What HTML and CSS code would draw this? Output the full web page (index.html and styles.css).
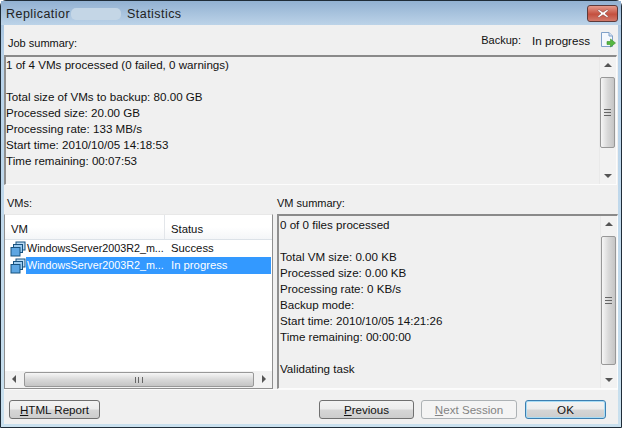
FILE: index.html
```html
<!DOCTYPE html>
<html lang="en">
<head>
<meta charset="utf-8">
<title>Replication Statistics</title>
<link rel="stylesheet" href="styles.css">
</head>
<body>
<div class="window">
  <div class="titlebar">
    <div class="title">Replicatior<span class="blur"></span>Statistics</div>
    <div class="close"><svg width="16" height="11" viewBox="0 0 16 11"><path d="M4 1.5 8 4.2 12 1.5 13.5 2.5 10 5.5 13.5 8.5 12 9.500 8 6.800 4 9.500 2.500 8.500 6 5.500 2.500 2.500Z" fill="#fff" stroke="#8a4a44" stroke-width=".6"/></svg></div>
  </div>
  <div class="content">
    <div class="summary-head">
      <span class="small job-label">Job summary:</span>
      <div class="state">
        <span class="small">Backup:</span><span>In progress</span>
        <svg class="state-icon" width="16" height="16" viewBox="0 0 16 16"><path d="M1.500.5H9L12.500 4V14.500H1.500Z" fill="#f4f8fd" stroke="#7fa0c8"/><path d="M9 .5V4H12.500" fill="#d5e3f3" stroke="#7fa0c8"/><path d="M7 9.500H10.500V7L15.500 11 10.500 15V12.500H7Z" fill="#55b840" stroke="#3d8f2e" stroke-width=".6"/></svg>
      </div>
    </div>
    <div class="textbox job">
      <div class="lines">
        <div>1 of 4 VMs processed (0 failed, 0 warnings)</div>
        <div>&nbsp;</div>
        <div>Total size of VMs to backup: 80.00 GB</div>
        <div>Processed size: 20.00 GB</div>
        <div>Processing rate: 133 MB/s</div>
        <div>Start time: 2010/10/05 14:18:53</div>
        <div>Time remaining: 00:07:53</div>
      </div>
      <div class="vscroll">
        <div class="arrow up"></div>
        <div class="track job-track"><div class="thumb job-thumb"><span class="grip"></span></div></div>
        <div class="arrow down"></div>
      </div>
    </div>
    <div class="lower">
      <div class="col">
        <div class="label small">VMs:</div>
        <div class="list">
          <div class="list-head"><div class="cell-vm head-vm">VM</div><div class="cell-status">Status</div></div>
          <div class="row">
            <svg class="vm-icon" width="16" height="16" viewBox="0 0 16 16"><rect x="6" y="1" width="9" height="8" fill="#bcdcf5" stroke="#17527f"/><rect x="3.500" y="3.500" width="9" height="8" fill="#9ccbef" stroke="#17527f"/><rect x="1" y="6.500" width="9" height="8.500" fill="#5da6e2" stroke="#17527f"/></svg>
            <div class="cell-vm">WindowsServer2003R2_m...</div><div class="cell-status">Success</div>
          </div>
          <div class="row selected">
            <svg class="vm-icon" width="16" height="16" viewBox="0 0 16 16"><rect x="6" y="1" width="9" height="8" fill="#bcdcf5" stroke="#17527f"/><rect x="3.500" y="3.500" width="9" height="8" fill="#9ccbef" stroke="#17527f"/><rect x="1" y="6.500" width="9" height="8.500" fill="#5da6e2" stroke="#17527f"/></svg>
            <div class="cell-vm hl">WindowsServer2003R2_m...</div><div class="cell-status hl">In progress</div>
          </div>
          <div class="list-space"></div>
          <div class="hscroll">
            <div class="arrow left"></div>
            <div class="hthumb"><span class="hgrip"></span></div>
            <div class="arrow right"></div>
          </div>
        </div>
      </div>
      <div class="col col-right">
        <div class="label small">VM summary:</div>
        <div class="textbox vmbox">
          <div class="lines">
            <div>0 of 0 files processed</div>
            <div>&nbsp;</div>
            <div>Total VM size: 0.00 KB</div>
            <div>Processed size: 0.00 KB</div>
            <div>Processing rate: 0 KB/s</div>
            <div>Backup mode:</div>
            <div>Start time: 2010/10/05 14:21:26</div>
            <div>Time remaining: 00:00:00</div>
            <div>&nbsp;</div>
            <div>Validating task</div>
          </div>
          <div class="vscroll">
            <div class="arrow up"></div>
            <div class="track vm-track"><div class="thumb vm-thumb"><span class="grip"></span></div></div>
            <div class="arrow down"></div>
          </div>
        </div>
      </div>
    </div>
    <div class="footer">
      <button class="btn report"><u>H</u>TML Report</button>
      <div class="footer-right">
        <button class="btn nav"><u>P</u>revious</button>
        <button class="btn next disabled"><u>N</u>ext Session</button>
        <button class="btn ok">OK</button>
      </div>
    </div>
  </div>
</div>
</body>
</html>
```
FILE: styles.css
```css
* { box-sizing: border-box; }
html, body { margin: 0; padding: 0; }
body { width: 622px; height: 428px; overflow: hidden; background: #fff; }
.window {
  width: 622px; height: 428px;
  display: flex; flex-direction: column;
  background: linear-gradient(#9fbcd9, #b9d3ea 60px, #c9e0ee);
  border: 1px solid #1f2c38; border-radius: 6px 6px 0 0;
  font-family: "Liberation Sans", sans-serif; font-size: 11.600px; color: #111;
}
.small { font-size: 11px; }
.titlebar { height: 24px; flex: none; display: flex; justify-content: space-between; padding: 0 3px 0 5px; background: linear-gradient(#92b1d2, #bcd3e8); }
.title { font-size: 12.500px; line-height: 26px; color: #222; letter-spacing: .45px; display: flex; }
.blur { width: 50px; height: 12px; margin: 7px 6px 0 1px; background: #c4d6e6; border-radius: 5px; }
.close { display: flex; align-items: center; justify-content: center; width: 31px; height: 17px; margin-top: 4px; border: 1px solid #5d3a3a; border-radius: 3px; background: linear-gradient(#e59b8c, #c4503f 55%, #d2796a); }
.content { flex: 1; margin: 0 3px 3px; background: #f0f0f0; display: flex; flex-direction: column; min-height: 0; }
.summary-head { height: 30px; flex: none; display: flex; justify-content: space-between; align-items: center; padding: 4px 2px 0 4px; }
.job-label { margin-top: 2px; }
.state { display: flex; align-items: center; gap: 11px; margin-bottom: 4px; }
.state-icon { margin-left: -1px; }
.textbox { display: flex; background: #f0f0f0; border-top: 2px solid #8a8a8a; border-left: 2px solid #8f8f8f; border-bottom: 1px solid #fcfcfc; border-right: 1px solid #fcfcfc; }
.job { height: 130px; flex: none; margin-right: 1px; }
.lines { flex: 1; padding: 0; line-height: 16px; }
.vmbox { height: 175px; flex: none; }
.vmbox .lines { padding: 1px 0 0 1px; }
.lines div { height: 16px; }
.vscroll { width: 17px; flex: none; display: flex; flex-direction: column; background: #f2f2f2; border-left: 1px solid #e9e9e9; }
.arrow { flex: none; width: 17px; height: 17px; position: relative; }
.arrow::after { content: ""; position: absolute; border: 4px solid transparent; }
.arrow.up::after { left: 4px; top: 2px; border-bottom: 4px solid #555; }
.arrow.down::after { left: 4px; top: 7px; border-top: 4px solid #555; }
.arrow.left::after { left: 1px; top: 4px; border-right: 4px solid #555; }
.arrow.right::after { left: 8px; top: 4px; border-left: 4px solid #555; }
.track { flex: 1; }
.thumb { display: flex; align-items: center; justify-content: center; width: 15px; border: 1px solid #989898; border-radius: 2px; background: linear-gradient(90deg, #f6f6f6, #d9d9d9 50%, #c5c5c5); }
.job-track { padding-top: 3px; }
.job-thumb { height: 71px; }
.vm-track { padding-top: 3px; }
.vm-thumb { height: 129px; }
.grip { width: 7px; height: 7px; border-top: 1px solid #666; border-bottom: 1px solid #666; position: relative; }
.grip::after { content: ""; position: absolute; left: 0; right: 0; top: 2px; border-top: 1px solid #666; }
.lower { display: flex; gap: 4px; height: 204px; flex: none; }
.col { display: flex; flex-direction: column; }
.col:first-child { width: 269px; }
.col-right { flex: 1; }
.label { height: 29px; flex: none; line-height: 16px; padding-top: 10px; }
.col:first-child .label { padding-left: 3px; }
.list { height: 175px; flex: none; border: 1px solid #8f8f8f; border-top-color: #e8e8e8; background: #fff; display: flex; flex-direction: column; font-size: 11.300px; }
.list-head { height: 25px; flex: none; display: flex; align-items: center; background: linear-gradient(#fff 50%, #f4f6f8); border-bottom: 1px solid #dce2e8; }
.head-vm { margin-left: 6px; width: 154px; border-right: 1px solid #e3e6ea; height: 24px; line-height: 28px; }
.list-head .cell-status { padding: 3px 0 0 6px; }
.row { height: 17px; flex: none; display: flex; align-items: center; margin-right: 1px; }
.vm-icon { flex: none; margin-left: 5px; }
.cell-vm { white-space: nowrap; }
.row .cell-vm { width: 145px; padding-left: 1px; height: 17px; line-height: 17px; font-size: 10.750px; }
.row .cell-status { flex: 1; padding-left: 0; height: 17px; line-height: 17px; }
.hl { background: #3399ff; color: #fff; }
.list-space { flex: 1; }
.hscroll { height: 17px; flex: none; display: flex; align-items: center; background: #f2f2f2; padding: 0 1px 0 2px; }
.hthumb { flex: 1; height: 15px; display: flex; align-items: center; justify-content: center; border: 1px solid #989898; border-radius: 2px; background: linear-gradient(#f6f6f6, #d9d9d9 50%, #c5c5c5); }
.hgrip { width: 8px; height: 6px; border-left: 1px solid #666; border-right: 1px solid #666; position: relative; }
.hgrip::after { content: ""; position: absolute; top: 0; bottom: 0; left: 2px; border-left: 1px solid #666; }
.footer { flex: 1; display: flex; justify-content: space-between; align-items: flex-start; padding: 10px 12px 0 5px; border-top: 1px solid #fbfbfb; }
.footer-right { display: flex; gap: 7px; }
.btn { height: 19px; padding: 0; font: 11.600px "Liberation Sans", sans-serif; color: #111; border: 1px solid #707070; border-radius: 3px; background: linear-gradient(#f3f3f3 0, #ececec 48%, #d6d6d6 52%, #cdcdcd); }
.report { width: 91px; }
.nav { width: 95px; }
.next { width: 96px; }
.disabled { color: #838383; border-color: #adb2b5; background: #f4f4f4; }
.ok { width: 81px; margin-left: 1px; border-color: #3c7fb1; box-shadow: inset 0 0 0 1px #a8dcf5; }
```
